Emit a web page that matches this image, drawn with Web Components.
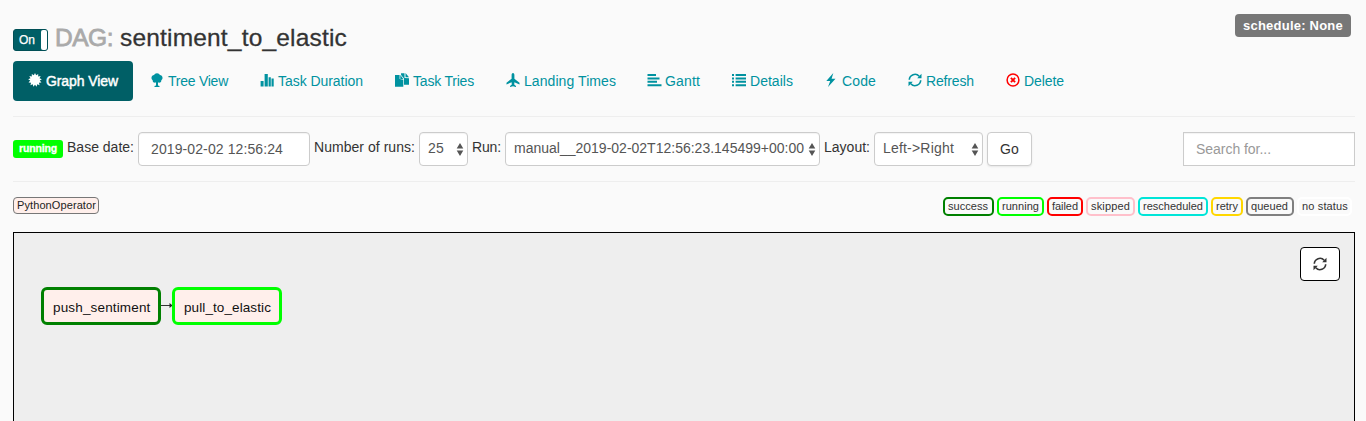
<!DOCTYPE html>
<html lang="en"><head><meta charset="utf-8"><title>DAG: sentiment_to_elastic</title>
<style>
html,body{margin:0;height:100%;overflow:hidden}
body{background:#fafafa;color:#333;font-family:"Liberation Sans",Arial,sans-serif;font-size:14px;line-height:20px}
</style></head><body>
<dag-page></dag-page>
<script>
const define=(name,html,after)=>customElements.define(name,class extends HTMLElement{
  connectedCallback(){
    if(this.shadowRoot)return;
    this.attachShadow({mode:'open'}).innerHTML=typeof html==='function'?html(this):html;
    if(after)after(this);
  }
});

/* Text tracked so that it takes exactly the width in its w attribute. */
define('fit-text','<style>:host{display:block;white-space:pre;flex:none}span{display:inline-block}</style><span><slot></slot></span>',el=>{
  const span=el.shadowRoot.querySelector('span'),w=+el.getAttribute('w');
  const n=el.textContent.length,nat=span.getBoundingClientRect().width;
  if(w&&nat)span.style.letterSpacing=((w-nat)/n).toFixed(4)+'px';
  if(w)el.style.width=w+'px';
});

const burst=()=>{let p=[];for(let i=0;i<26;i++){const a=i*Math.PI/13,r=i%2?4.8:6.9;p.push((7+r*Math.sin(a)).toFixed(2)+','+(7-r*Math.cos(a)).toFixed(2))}return `<polygon points="${p.join(' ')}"/>`};
const ICONS={
  graph:burst(),
  tree:'<path d="M7 .2C8.500.2 9.500 1 9.800 1.900 11.600 2 12.700 3.400 12.500 5c0 1-.5 1.800-1.200 2.200.2 1.500-1 2.700-2.400 2.400L8 9.500V12.400l1.500.7v.9h-5v-.9L6 12.400V9.500l-.9.100C3.700 9.900 2.500 8.700 2.700 7.200 2 6.800 1.500 6 1.500 5 1.300 3.400 2.400 2 4.200 1.900 4.500 1 5.500.2 7 .2z"/>',
  duration:'<path d="M.6 8h3v5.600h-3zM4.600 1h3.200v12.600H4.600zM8.600 4.200h2.200v9.400H8.600zM11.500 5.500h2.200v8.100h-2.200z"/>',
  tries:'<path d="M0 2h4.600v4l3.700.8v6.900H0zM5.300 2l3 3.900H5.300zM6 .2h3.500v4.700L14 5.300v6.400H9V5.500L6.100 1.900zM10.500 0L14 4.200h-3.500z"/>',
  landing:'<path d="M7 0C8 0 8.400 1 8.400 2.200V5.800L13.500 9.800V11.500L8.400 9.200 8.200 11.400 10 13V14L7 13.200 4 14V13L5.800 11.400 5.600 9.200.5 11.500V9.800L5.600 5.800V2.200C5.600 1 6 0 7 0z"/>',
  gantt:'<path d="M.5 1H9v2H.5zM.5 4.400h12v2H.5zM.5 7.800H10v2H.5zM.5 11.200H14.500v2H.5z"/>',
  details:'<path d="M0 1h2v2H0zM3.600 1H14v2H3.600zM0 4.400h2v2H0zM3.600 4.400H14v2H3.600zM0 7.800h2v2H0zM3.600 7.800H14v2H3.600zM0 11.200h2v2H0zM3.600 11.200H14v2H3.600z"/>',
  code:'<path d="M9.300 0L2.300 8H6.200L4 14 11.500 5.700H7.600z"/>',
  refresh:'<path d="M12.700 7.300A5.700 5.700 0 0 1 2.800 10.800M1.300 6.700A5.700 5.700 0 0 1 11.200 3.200" fill="none" stroke="currentColor" stroke-width="1.600"/><path d="M13.500.8V5.300H9.200zM.5 13.200V8.700H4.800z"/>',
  delete:'<circle cx="7" cy="7" r="5.900" fill="none" stroke="currentColor" stroke-width="1.500"/><path d="M4.900 4.900L9.100 9.100M9.100 4.900L4.900 9.100" stroke="currentColor" stroke-width="1.900"/>'
};
define('glyph-icon',el=>`<style>:host{display:block;width:14px;height:14px;flex:none}svg{display:block;width:100%;height:100%;overflow:visible}</style><svg viewBox="0 0 14 14" fill="currentColor">${ICONS[el.getAttribute('name')]}</svg>`);

define('dag-heading',`<style>
:host{display:flex;height:61px;box-sizing:border-box;padding-top:14px}
.toggle{display:flex;box-sizing:border-box;width:35px;height:22px;margin-top:15px;border:1px solid #004f56;border-radius:3px;background:#005f66;color:#fff;font-size:12px;line-height:20px;padding-left:5px;-webkit-text-stroke:.25px}
.knob{width:6px;height:20px;margin-left:6px;background:#fff;border-radius:2px}
.name{display:flex;margin:10px 0 0 7px;font-size:24.5px;line-height:28px;gap:7px;-webkit-text-stroke:.3px}
.name .k{color:#aaa;-webkit-text-stroke:.8px}
.badge{margin-left:auto;margin-right:4px;width:116px;height:23px;box-sizing:border-box;background:#777;border-radius:4px;color:#fff;font-weight:bold;font-size:13px;line-height:23px;padding-left:8px}
</style><div class="toggle"><fit-text w="16">On</fit-text><div class="knob"></div></div>
<div class="name"><fit-text class="k" w="58">DAG:</fit-text><fit-text w="227">sentiment_to_elastic</fit-text></div>
<div class="badge"><fit-text w="100">schedule: None</fit-text></div>`);

define('nav-tab',el=>`<style>
:host{display:flex;box-sizing:border-box;width:var(--w);height:40px;padding:10px 0 0 15px;gap:4px;color:#0092a0;border-radius:4px}
:host([active]){background:#005f66;color:#fff;-webkit-text-stroke:.45px;margin-right:2px}
:host([name=delete]) glyph-icon{color:#f00}
glyph-icon{margin-top:2px}
</style><glyph-icon name="${el.getAttribute('name')}"></glyph-icon><fit-text w="${el.getAttribute('tw')}">${el.getAttribute('label')}</fit-text>`);
const TABS=[['graph','Graph View',120,72],['tree','Tree View',110,60],['duration','Task Duration',135,85],['tries','Task Tries',111,61],['landing','Landing Times',141,92],['gantt','Gantt',85,35],['details','Details',92,43],['code','Code',84,34],['refresh','Refresh',98,48],['delete','Delete',90,40]];
define('nav-tabs',`<style>:host{display:flex;height:40px}</style>${TABS.map((t,i)=>`<nav-tab ${i?'':'active'} name="${t[0]}" label="${t[1]}" tw="${t[3]}" style="--w:${t[2]}px"></nav-tab>`).join('')}`);

define('form-box',el=>`<style>
:host{display:flex;box-sizing:border-box;flex:none;width:var(--w);height:34px;border:1px solid #ccc;border-radius:4px;background:#fff;color:#555;padding-left:12px;line-height:32px;box-shadow:inset 0 1px 1px rgba(0,0,0,.05)}
:host([kind=select]){padding-left:8px;line-height:31px}
:host([kind=button]){color:#333;box-shadow:0 1px 2px rgba(0,0,0,.08)}
:host([kind=search]){color:#999;border-radius:0}
svg{display:block;margin:10px 3px 0 auto}
</style><slot></slot>${el.getAttribute('kind')==='select'?'<svg width="8" height="13" viewBox="0 0 8 13" fill="#555"><path d="M4 0L7.300 5.400H.7zM4 13L7.300 7.600H.7z"/></svg>':''}`);

define('run-filter',`<style>
:host{display:flex;height:64px;box-sizing:border-box;padding-top:15px;line-height:30px}
.state{box-sizing:border-box;width:50px;height:18px;margin:8px 4px 0 0;background:#0f0;border-radius:3px;color:#fff;font-weight:bold;font-size:10.5px;line-height:17px;padding-left:6px;-webkit-text-stroke:.3px}
form-box{margin:0 4px}
.search{margin:0 0 0 auto}
</style><div class="state"><fit-text w="38">running</fit-text></div>
<fit-text w="67">Base date:</fit-text><form-box style="--w:172px"><fit-text w="132">2019-02-02 12:56:24</fit-text></form-box>
<fit-text w="101">Number of runs:</fit-text><form-box kind="select" style="--w:49px"><fit-text w="16">25</fit-text></form-box>
<fit-text w="29">Run:</fit-text><form-box kind="select" style="--w:315px"><fit-text w="290">manual__2019-02-02T12:56:23.145499+00:00</fit-text></form-box>
<fit-text w="46">Layout:</fit-text><form-box kind="select" style="--w:109px"><fit-text w="71">Left-&gt;Right</fit-text></form-box>
<form-box kind="button" style="--w:45px;margin-left:0"><fit-text w="19">Go</fit-text></form-box>
<form-box class="search" kind="search" style="--w:172px"><fit-text w="75">Search for...</fit-text></form-box>`);

const STATES=[['success','#008000',51,40],['running','#00ff00',47,37],['failed','#ff0000',36,26],['skipped','#ffc0cb',49,39],['rescheduled','#00e5d8',70,60],['retry','#ffd700',32,22],['queued','#808080',48,37],['no status','#ffffff',55,46]];
define('state-legend',`<style>
:host{display:flex;height:50px;box-sizing:border-box;padding:15px 3px 0 0;font-size:11px;line-height:15px;gap:3px}
.op{box-sizing:border-box;width:86px;height:17px;border:1px solid #777;border-radius:4px;background:#ffefeb;padding-left:3px;color:#222;margin-right:auto;line-height:15px}
.s{box-sizing:border-box;height:19px;border:2px solid;border-radius:5px;padding-left:3px}
.s fit-text{color:#333}
</style><div class="op"><fit-text w="79">PythonOperator</fit-text></div>${STATES.map(s=>`<div class="s" style="border-color:${s[1]};width:${s[2]}px"><fit-text w="${s[3]}">${s[0]}</fit-text></div>`).join('')}`);

define('task-node',`<style>:host{display:block;box-sizing:border-box;width:var(--w);height:38px;border:3px solid var(--c);border-radius:6px;background:#ffefeb;color:#111;font-size:13.5px;line-height:35px;padding-left:9px}</style><slot></slot>`);
define('graph-canvas',`<style>
:host{display:flex;justify-content:space-between;box-sizing:border-box;height:189px;border:1px solid #000;border-bottom:0;background:#eee;padding:14px 14px 0 27px}
.flow{display:flex;padding-top:40px}
svg{display:block;margin-top:15px}
.btn{display:flex;align-items:center;justify-content:center;box-sizing:border-box;width:40px;height:34px;border:1px solid #000;border-radius:4px;background:#fff;color:#333}
</style><div class="flow"><task-node style="--w:120px;--c:#008000"><fit-text w="97.5">push_sentiment</fit-text></task-node>
<svg width="11" height="8" viewBox="0 0 11 8"><path d="M0 3.500h9" stroke="#333"/><path d="M8.500 1L11.500 3.500 8.500 6z" fill="#222"/></svg>
<task-node style="--w:110px;--c:#00ff00"><fit-text w="87">pull_to_elastic</fit-text></task-node></div>
<div class="btn"><glyph-icon name="refresh"></glyph-icon></div>`);

define('dag-page',`<style>:host{display:block;padding:0 11px 0 13px}
hr{height:1px;border:0;margin:0;background:#eee}hr.first{margin-top:15px}
</style><dag-heading></dag-heading><nav-tabs></nav-tabs><hr class="first"><run-filter></run-filter><hr><state-legend></state-legend><graph-canvas></graph-canvas>`);
</script></body></html>
